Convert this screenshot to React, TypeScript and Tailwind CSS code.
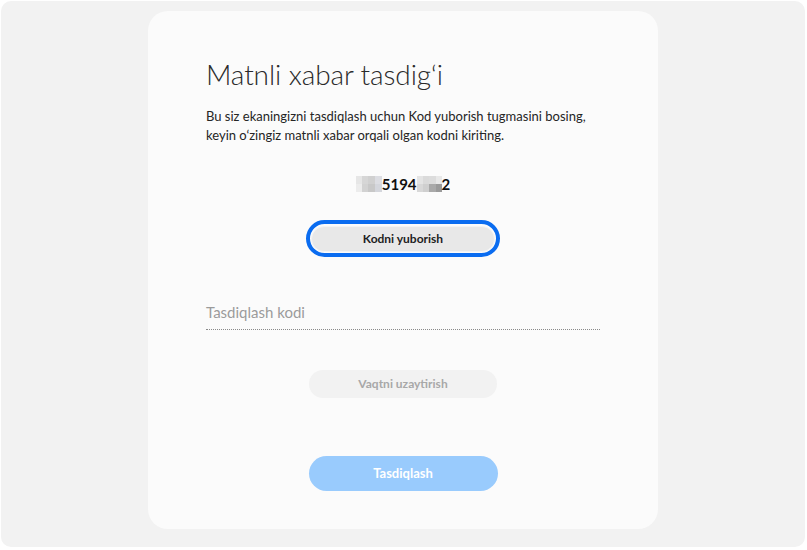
import React from "react";

const Blur1 = () => (
  <span className="inline-grid grid-cols-[6px_6px_7px_7px] grid-rows-[8px_8px] align-middle">
    <span className="bg-[#e6e6e6]" />
    <span className="bg-[#d6d6d6]" />
    <span className="bg-[#d0d0d0]" />
    <span className="bg-[#dcdde2]" />
    <span className="bg-[#ececec]" />
    <span className="bg-[#d2d2d2]" />
    <span className="bg-[#c8c8c8]" />
    <span className="bg-[#d4d6dc]" />
  </span>
);

const Blur2 = () => (
  <span className="inline-grid grid-cols-[6px_6px_7px_6px] grid-rows-[8px_8px] align-middle">
    <span className="bg-[#e4e4e4]" />
    <span className="bg-[#dadada]" />
    <span className="bg-[#dcdcdc]" />
    <span className="bg-[#e8e8e8]" />
    <span className="bg-[#d8d8d8]" />
    <span className="bg-[#cfcfcf]" />
    <span className="bg-[#a9a9a9]" />
    <span className="bg-[#9a9a9a]" />
  </span>
);

export default function App() {
  return (
    <div className="w-[807px] h-[550px] bg-white p-px" style={{ fontFamily: "Lato, 'Noto Sans', sans-serif" }}>
      <div className="w-[804px] h-[546px] bg-[#f2f2f2] rounded-[10px] flex justify-center pt-[10px]">
        <div className="w-[510px] h-[518px] bg-[#fbfbfb] rounded-[20px] px-[58px] pt-[46px] flex flex-col">
          <h1 className="text-[28px] font-light text-[#2a2a2a] leading-[34px] tracking-[-0.1px]">Matnli xabar tasdig‘i</h1>
          <p className="mt-[16px] text-[13px] leading-[19px] text-[#252525]">
            Bu siz ekaningizni tasdiqlash uchun Kod yuborish tugmasini bosing,
            <br />
            keyin o‘zingiz matnli xabar orqali olgan kodni kiriting.
          </p>
          <div className="mt-[29px] flex justify-center items-center h-[20px] text-[15px] font-bold text-[#111] leading-none">
            <Blur1 />
            <span>5194</span>
            <Blur2 />
            <span>2</span>
          </div>
          <div className="mt-[26px] flex justify-center">
            <div className="rounded-full border-[4px] border-[#0a6cf0] p-px">
              <button className="w-[184px] h-[26px] rounded-full bg-[#e8e8e8] border border-[#f4f4f4] text-[12px] font-bold text-[#1e1e1e]">
                Kodni yuborish
              </button>
            </div>
          </div>
          <div className="mt-[43px] border-b border-dotted border-[#8a8a8a] pb-[5px]">
            <span className="text-[15px] text-[#9b9b9b] leading-[20px]">Tasdiqlash kodi</span>
          </div>
          <div className="mt-[40px] flex justify-center">
            <button className="w-[188px] h-[28px] rounded-full bg-[#f2f2f2] text-[12px] font-bold text-[#a8a8a8]">
              Vaqtni uzaytirish
            </button>
          </div>
          <div className="mt-[58px] flex justify-center">
            <button className="w-[189px] h-[35px] rounded-full bg-[#99cbfd] text-[13px] font-bold text-white">
              Tasdiqlash
            </button>
          </div>
        </div>
      </div>
    </div>
  );
}
